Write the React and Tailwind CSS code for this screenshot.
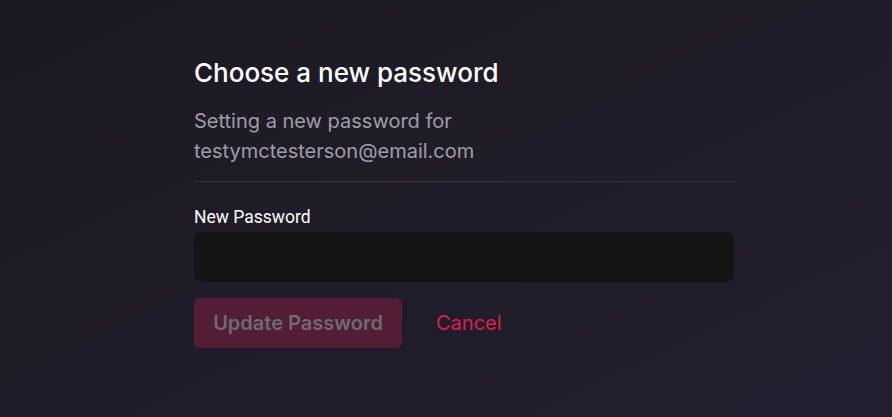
export default function App() {
  return (
    <div
      className="min-h-[417px] w-full bg-gradient-to-br from-[#1b1921] via-[#201d2a] to-[#221e2d]"
      style={{ fontFamily: "Inter, 'Noto Sans', sans-serif" }}
    >
      <div className="w-[540px] ml-[194px] pt-[56px]">
        <h1 className="text-[26px] leading-[34px] font-medium text-white">
          Choose a new password
        </h1>

        <p className="mt-[16px] text-[20px] leading-[30px] text-[#a09ca8]">
          Setting a new password for
          <br />
          testymctesterson@email.com
        </p>

        <div className="mt-[15px] h-px bg-[#36333f]" />

        <label
          className="block mt-[25px] text-[17.5px] leading-[20px] text-white"
          style={{ fontFamily: "Roboto, sans-serif" }}
        >
          New Password
        </label>
        <input
          type="password"
          className="mt-[5px] block w-full h-[50px] rounded-lg bg-[#141414] px-4 text-white outline-none"
        />

        <div className="mt-[16px] flex items-center gap-[34px]">
          <button className="h-[50px] w-[208px] rounded-md bg-[#521d35] text-[20px] font-semibold text-[#6e6a74]">
            Update Password
          </button>
          <button className="text-[20px] text-[#dc1f4f]">Cancel</button>
        </div>
      </div>
    </div>
  );
}
